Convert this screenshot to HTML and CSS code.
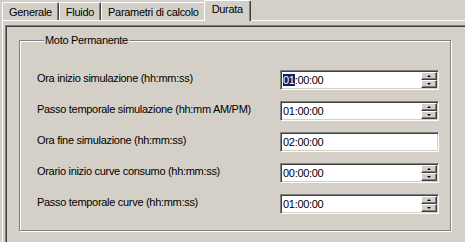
FILE: index.html
```html
<!DOCTYPE html>
<html>
<head>
  <title>Durata</title>
  <link rel="stylesheet" href="styles.css">
</head>
<body>
  <div class="tabs">
    <div class="tab">Generale</div>
    <div class="tab">Fluido</div>
    <div class="tab">Parametri di calcolo</div>
    <div class="tab active">Durata</div>
  </div>

  <div class="page">
    <div class="frame">
      <fieldset class="group">
        <legend>Moto Permanente</legend>
        <div class="rows">
          <div class="row">
            <span class="label">Ora inizio simulazione (hh:mm:ss)</span>
            <div class="field">
              <span class="value"><span class="sel">01</span>:00:00</span>
              <span class="spin"><span class="up"></span><span class="down"></span></span>
            </div>
          </div>
          <div class="row">
            <span class="label">Passo temporale simulazione (hh:mm AM/PM)</span>
            <div class="field">
              <span class="value">01:00:00</span>
              <span class="spin"><span class="up"></span><span class="down"></span></span>
            </div>
          </div>
          <div class="row">
            <span class="label">Ora fine simulazione (hh:mm:ss)</span>
            <div class="field">
              <span class="value">02:00:00</span>
            </div>
          </div>
          <div class="row">
            <span class="label">Orario inizio curve consumo (hh:mm:ss)</span>
            <div class="field">
              <span class="value">00:00:00</span>
              <span class="spin"><span class="up"></span><span class="down"></span></span>
            </div>
          </div>
          <div class="row">
            <span class="label">Passo temporale curve (hh:mm:ss)</span>
            <div class="field">
              <span class="value">01:00:00</span>
              <span class="spin"><span class="up"></span><span class="down"></span></span>
            </div>
          </div>
        </div>
      </fieldset>
    </div>
  </div>
</body>
</html>
```

FILE: styles.css
```css
body {
  margin: 0;
  height: 242px;
  overflow: hidden;
  background-color: #d4d0c8;
  font-family: "Liberation Sans", Arial, sans-serif;
  font-size: 11px;
  letter-spacing: -0.3px;
  color: #000;
}

/* tab strip */
.tabs {
  display: flex;
  align-items: flex-end;
  height: 20px;
  padding-left: 2px;
}

.tab {
  height: 17px;
  line-height: 18px;
  padding: 0 6px 0 6px;
  border-top: 1px solid #fff;
  border-left: 1px solid #fff;
  border-right: 1px solid #404040;
  border-top-left-radius: 2px;
  border-top-right-radius: 2px;
  box-shadow: inset -1px 0 #808080;
}

.tab.active {
  height: 20px;
  line-height: 17px;
  margin-bottom: -1px;
  margin-left: -2px;
  padding: 0 7px;
  position: relative;
  z-index: 1;
  background-color: #d4d0c8;
}

/* tab page */
.page {
  margin-left: 2px;
  padding: 4px 0 0 2px;
  border-top: 1px solid #fff;
  border-left: 1px solid #fff;
}

.frame {
  height: 217px;
  box-sizing: border-box;
  border-top: 1px solid #808080;
  border-left: 1px solid #808080;
  box-shadow: inset 1px 1px #404040;
  padding: 8px 0 0 13px;
}

.group {
  width: 432px;
  box-sizing: border-box;
  margin: 0;
  padding: 0 0 16px 17px;
  border: 1px solid #808080;
  box-shadow: inset 1px 1px #fff, 1px 1px #fff;
}

.group legend {
  margin-left: 7px;
  padding: 0 1px;
  line-height: 13px;
  background-color: #d4d0c8;
}

.rows {
  display: flex;
  flex-direction: column;
  gap: 11px;
  padding-top: 23px;
}

.row {
  display: flex;
  align-items: center;
  height: 20px;
}

.label {
  width: 243px;
  padding-bottom: 4px;
}

/* sunken edit box */
.field {
  display: flex;
  width: 159px;
  height: 20px;
  box-sizing: border-box;
  padding: 1px 1px 1px 2px;
  border: 1px solid;
  border-color: #808080 #fff #fff #808080;
  background-color: #fff;
  box-shadow: inset 1px 1px #404040, inset -1px -1px #d4d0c8;
  line-height: 16px;
}

.sel {
  background-color: #0a246a;
  color: #fff;
}

.spin {
  display: flex;
  flex-direction: column;
  width: 16px;
  margin-left: auto;
}

.up,
.down {
  display: flex;
  align-items: center;
  justify-content: center;
  height: 8px;
  box-sizing: border-box;
  background-color: #d4d0c8;
  border: 1px solid;
  border-color: #fff #404040 #404040 #fff;
  box-shadow: inset -1px -1px #808080;
}

.up::after,
.down::after {
  content: "";
  border-left: 2px solid transparent;
  border-right: 2px solid transparent;
}

.up::after {
  border-bottom: 2px solid #000;
}

.down::after {
  border-top: 2px solid #000;
}
```
